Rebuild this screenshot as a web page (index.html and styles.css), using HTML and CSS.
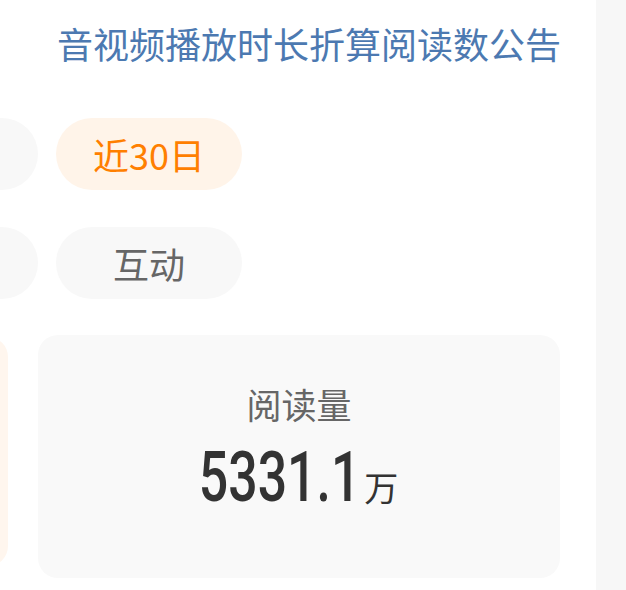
FILE: index.html
```html
<!DOCTYPE html>
<html lang="zh-CN">
<head>
<meta charset="utf-8">
<title>阅读数</title>
<link rel="stylesheet" href="styles.css">
</head>
<body>
<div class="page">
  <main class="panel">
    <header class="notice">
      <a class="notice-link">音视频播放时长折算阅读数公告</a>
    </header>
    <section class="filters">
      <div class="pill-row">
        <span class="pill"></span>
        <span class="pill pill-active">近30日</span>
      </div>
      <div class="pill-row">
        <span class="pill"></span>
        <span class="pill">互动</span>
      </div>
    </section>
    <section class="cards">
      <div class="card card-prev"></div>
      <div class="card card-current">
        <div class="card-label">阅读量</div>
        <div class="card-value"><span class="num">5331.1</span><span class="unit">万</span></div>
      </div>
    </section>
  </main>
  <aside class="side"></aside>
</div>
</body>
</html>
```

FILE: styles.css
```css
html, body {
  margin: 0;
  padding: 0;
  background: #ffffff;
}

body {
  font-family: "Noto Sans CJK SC", "Noto Sans", sans-serif;
}

.page {
  display: flex;
  width: 626px;
  height: 590px;
  overflow: hidden;
}

.panel {
  width: 596px;
  flex: none;
  overflow: hidden;
  background: #ffffff;
}

.side {
  flex: 1;
  background: #f7f7f7;
}

.notice {
  height: 86px;
  display: flex;
  justify-content: flex-end;
  align-items: center;
  padding-right: 35px;
}

.notice-link {
  font-size: 36px;
  line-height: 86px;
  color: #4c79b1;
}

.filters {
  padding-top: 32px;
  display: flex;
  flex-direction: column;
  gap: 37px;
}

.pill-row {
  display: flex;
  gap: 18px;
  margin-left: -148px;
}

.pill {
  width: 186px;
  height: 72px;
  border-radius: 36px;
  background: #f8f8f8;
  color: #666666;
  font-size: 36px;
  line-height: 72px;
  text-align: center;
  flex: none;
}

.pill-active {
  background: #fff4e9;
  color: #ff7f00;
}

.cards {
  display: flex;
  gap: 30px;
  margin-top: 36px;
  margin-left: -514px;
  align-items: flex-start;
}

.card {
  width: 522px;
  flex: none;
  border-radius: 20px;
}

.card-prev {
  height: 229px;
  margin-top: 2px;
  background: #fff6ee;
}

.card-current {
  height: 243px;
  background: #f9f9f9;
  display: flex;
  flex-direction: column;
  align-items: center;
  box-sizing: border-box;
  padding-top: 47px;
}

.card-label {
  font-size: 35px;
  line-height: 44px;
  color: #666666;
}

.card-value {
  display: flex;
  align-items: baseline;
  margin-top: 11px;
  color: #333333;
}

.num {
  display: inline-block;
  font-family: Roboto, "Liberation Sans", sans-serif;
  font-weight: 500;
  font-size: 70px;
  line-height: 80px;
  transform: scaleX(0.74);
  transform-origin: right center;
  margin-left: -58px;
}

.unit {
  font-size: 34px;
  margin-left: 4px;
}
```
